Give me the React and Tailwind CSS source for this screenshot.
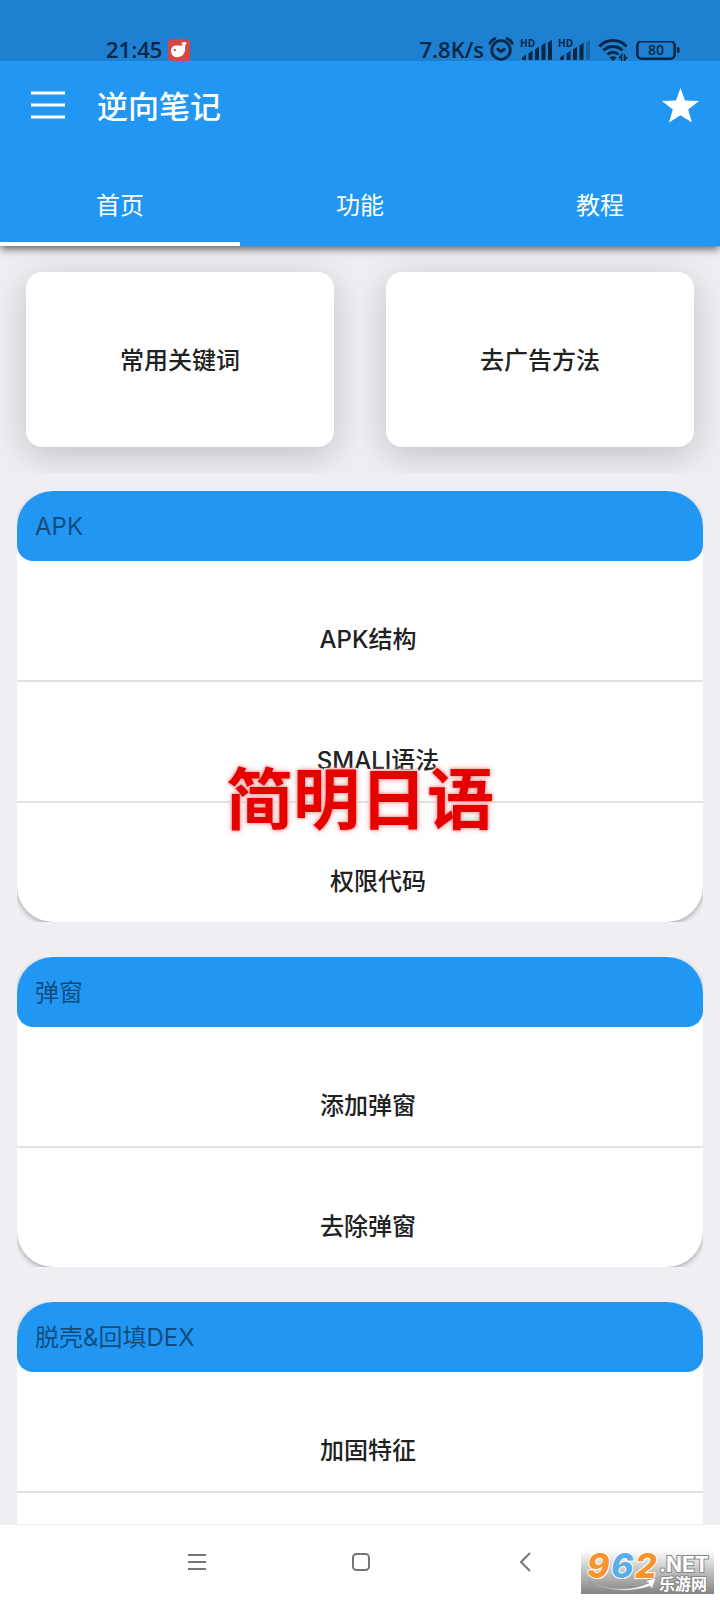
import { useState } from 'react'

const TABS = ['首页', '功能', '教程']

const SHORTCUTS = ['常用关键词', '去广告方法']

const GROUPS = [
  {
    title: 'APK',
    rows: [
      { label: 'APK结构' },
      { label: 'SMALI语法', indent: true },
      { label: '权限代码', indent: true },
    ],
  },
  { title: '弹窗', rows: [{ label: '添加弹窗' }, { label: '去除弹窗' }] },
  { title: '脱壳&回填DEX', rows: [{ label: '加固特征' }, { label: '' }] },
]

function WhaleIcon() {
  return (
    <svg viewBox="0 0 22 22" className="h-[22px] w-[22px]" aria-hidden="true">
      <rect width="22" height="22" rx="4" fill="#d84545" />
      <path d="M3 11.500C3.200 8.600 5.400 6.600 8.400 6.600c2.100 0 4.300.3 5.900-.4.800-.4.500-1.200-.5-1.300-.3-.6-.2-1.300.2-1.700h4.300c.4 1.400-.2 2.300-1.300 2.900.5 3.500.3 7-1.700 9.400-2.100 2.500-5.800 3.400-8.700 2.200C4.100 16.700 2.900 14.200 3 11.500z" fill="#fff" />
      <circle cx="6.800" cy="11" r="0.900" fill="#5a1a1a" />
    </svg>
  )
}

function AlarmIcon() {
  return (
    <svg viewBox="0 0 26 24" className="h-6 w-[26px]" fill="none" stroke="currentColor" strokeWidth="2.8" strokeLinecap="round" aria-hidden="true">
      <circle cx="13" cy="13" r="9.300" />
      <path d="M1.800 6.200C3 4 4.700 2.500 7 1.600M24.200 6.200C23 4 21.300 2.500 19 1.600" />
      <path d="M9.800 12.200l3.200 2.500 3.500-2.500" strokeLinejoin="round" />
    </svg>
  )
}

function SignalIcon({ weak }) {
  return (
    <svg viewBox="0 0 32 22" className="h-[22px] w-8 overflow-visible" fill="currentColor" aria-hidden="true">
      <text x="0" y="8" fontSize="10" fontWeight="700">HD</text>
      <path d="M2 20v-1.500l4-2.700V20q0 1-1 1H3q-1 0-1-1z" />
      <path d="M8.500 20v-5.500l4-2.700V20q0 1-1 1h-2q-1 0-1-1z" />
      <path d="M15 20V10.500l4-2.700V20q0 1-1 1h-2q-1 0-1-1z" />
      <path d="M21.500 20V6.500l4-2.700V20q0 1-1 1h-2q-1 0-1-1z" />
      <path d="M28 20V3.500l4-2.700V20q0 1-1 1h-2q-1 0-1-1z" opacity={weak ? 0.3 : 1} />
    </svg>
  )
}

function WifiIcon() {
  return (
    <svg viewBox="0 0 30 22" className="h-[22px] w-[30px]" fill="none" stroke="currentColor" strokeWidth="3" aria-hidden="true">
      <path d="M1.500 7.500C9-.4 21-.4 28.500 7.500" />
      <path d="M5.500 11.500c5.400-5.400 13.600-5.400 19 0" />
      <path d="M9.500 15.500c3.200-3.100 7.800-3.100 11 0" />
      <path d="M11.500 18.500c2-1.800 5-1.800 7 0L15 22z" fill="currentColor" stroke="none" />
      <path d="M23.500 22v-6l-2.500 3.500M26.500 15v6.500l2.500-3.500" strokeWidth="1.600" />
    </svg>
  )
}

function BatteryIcon() {
  return (
    <svg viewBox="0 0 44 20" className="h-5 w-11" aria-hidden="true">
      <rect x="1.300" y="0.300" width="37.400" height="17.400" rx="4.500" fill="none" stroke="currentColor" strokeWidth="2.600" className="overflow-visible" />
      <rect x="41" y="6" width="2.500" height="6" rx="1.200" fill="currentColor" />
      <text x="20" y="14" fontSize="14" fontWeight="600" textAnchor="middle" fill="currentColor">80</text>
    </svg>
  )
}

function StatusBar() {
  return (
    <div className="relative z-20 flex h-[61px] shrink-0 items-end justify-between bg-[#1d80d0] pr-10 pl-[106px] font-['Open_Sans','Noto_Sans_CJK_SC',sans-serif] text-[22px] leading-6 font-semibold text-[#062747]">
      <div className="flex items-end gap-1.5">
        <span>21:45</span>
        <WhaleIcon />
      </div>
      <div className="flex items-end gap-1.5">
        <div className="flex items-end gap-1">
          <span>7.8K/s</span>
          <AlarmIcon />
        </div>
        <SignalIcon />
        <SignalIcon weak />
        <div className="flex items-end gap-2 pl-0.5">
          <WifiIcon />
          <BatteryIcon />
        </div>
      </div>
    </div>
  )
}

function Header({ active, onSelect }) {
  return (
    <header className="relative z-10 shrink-0 bg-[#2196f3] text-white shadow-[0_3px_8px_rgba(0,0,0,0.6)]">
      <div className="flex h-[93px] items-start pt-[26px] pr-[21px] pl-[31px]">
        <button type="button" aria-label="菜单" className="mt-1 mr-8">
          <svg viewBox="0 0 34 28" className="h-7 w-[34px]" stroke="currentColor" strokeWidth="3" aria-hidden="true">
            <path d="M0 2h34M0 14h34M0 26h34" />
          </svg>
        </button>
        <h1 className="flex-1 text-[31px] leading-10 font-medium">逆向笔记</h1>
        <button type="button" aria-label="收藏">
          <svg viewBox="0 0 37 35" className="mt-px h-[35px] w-[37px]" fill="currentColor" aria-hidden="true">
            <path d="M18.500 0l4.600 12.500L37 13.100 26.200 21.500 30 34.600 18.500 27.300 7 34.600l3.800-13.100L0 13.100l13.900-.6z" />
          </svg>
        </button>
      </div>
      <nav className="grid grid-cols-3">
        {TABS.map((tab, i) => (
          <button
            key={tab}
            type="button"
            onClick={() => onSelect(i)}
            className={`h-[92px] border-b-4 pt-4 text-2xl ${active === i ? 'border-white' : 'border-transparent'}`}
          >
            {tab}
          </button>
        ))}
      </nav>
    </header>
  )
}

function Group({ title, rows }) {
  return (
    <section className="overflow-hidden">
      <div className="overflow-hidden rounded-[36px] bg-white shadow-[0_2px_5px_rgba(0,0,0,0.3)]">
        <h2 className="flex h-[70px] items-center rounded-b-2xl bg-[#2196f3] px-[18px] pt-0.5 text-2xl text-black/50">{title}</h2>
        <ul className="divide-y-2 divide-[#e2e2e2]">
          {rows.map((row, i) => (
            <li key={i}>
              <button
                type="button"
                className={`flex h-[119px] w-full items-center justify-center pt-[38px] text-2xl font-medium ${row.indent ? 'pl-9' : 'pl-4'}`}
              >
                {row.label}
              </button>
            </li>
          ))}
        </ul>
      </div>
    </section>
  )
}

function NavBar() {
  return (
    <nav className="flex h-[76px] shrink-0 items-center justify-center gap-[146px] border-t border-[#f0f0f0] bg-white pb-0.5 pl-0.5 text-[#757575]">
      <button type="button" aria-label="最近任务">
        <svg viewBox="0 0 18 20" className="h-5 w-[18px]" stroke="currentColor" strokeWidth="2" aria-hidden="true">
          <path d="M0 3h18M0 10h18M0 17h18" />
        </svg>
      </button>
      <button type="button" aria-label="主屏幕">
        <svg viewBox="0 0 18 20" className="h-5 w-[18px]" fill="none" stroke="currentColor" strokeWidth="2" aria-hidden="true">
          <rect x="1" y="2" width="16" height="16" rx="3.500" />
        </svg>
      </button>
      <button type="button" aria-label="返回">
        <svg viewBox="0 0 18 20" className="h-5 w-[18px]" fill="none" stroke="currentColor" strokeWidth="2" aria-hidden="true">
          <path d="M14 1L5 10l9 9" />
        </svg>
      </button>
    </nav>
  )
}

function SiteBadge() {
  return (
    <div className="absolute right-1.5 bottom-1.5 h-[44px] w-[133px] bg-linear-to-b from-white to-[#848484]">
      <svg viewBox="0 0 133 44" className="h-full w-full overflow-visible" role="img" aria-label="962.NET 乐游网">
        <g fontWeight="800" stroke="#fff" strokeWidth="2" paintOrder="stroke">
          <text x="6" y="28" fontSize="34" fontStyle="italic" fill="#f7942b">9</text>
          <text x="30" y="28" fontSize="34" fontStyle="italic" fill="#5aaee6">6</text>
          <text x="54" y="28" fontSize="34" fontStyle="italic" fill="#f7942b">2</text>
        </g>
        <g fill="#fff" stroke="#888" strokeWidth="2" paintOrder="stroke">
          <text x="78" y="22" fontSize="21" fontWeight="700">.NET</text>
          <text x="78" y="40" fontSize="16" fontWeight="700">乐游网</text>
        </g>
        <path d="M7 31c18 9 42 11 61 2l-4-2 11-3-4 11-2-3c-19 7-46 5-62-5z" fill="#fff" stroke="#888" strokeWidth="0.500" />
      </svg>
    </div>
  )
}

export default function App() {
  const [active, setActive] = useState(0)

  return (
    <div className="relative flex h-screen flex-col overflow-hidden bg-[#efeef3] font-[family-name:Inter,'Noto_Sans_CJK_SC',sans-serif] text-[#212121]">
      <StatusBar />
      <Header active={active} onSelect={setActive} />

      <main className="min-h-0 flex-1 overflow-hidden">
        <div className="grid grid-cols-2 overflow-hidden">
          {SHORTCUTS.map((label) => (
            <div key={label} className="overflow-hidden p-[26px]">
              <button
                type="button"
                className="h-[175px] w-full rounded-2xl bg-white pt-0.5 text-2xl font-medium shadow-[0_8px_36px_rgba(0,0,0,0.2)]"
              >
                {label}
              </button>
            </div>
          ))}
        </div>
        <div className="flex flex-col gap-[35px] px-[17px] pt-[18px]">
          {GROUPS.map((group) => (
            <Group key={group.title} title={group.title} rows={group.rows} />
          ))}
        </div>
      </main>

      <NavBar />

      <div className="pointer-events-none absolute inset-0 grid place-items-center">
        <p className="text-[67px] leading-[66px] font-bold text-[#e60000] [paint-order:stroke_fill] [-webkit-text-stroke:3px_#fff4f4] [text-shadow:0_0_3px_#ec9a9a,0_0_6px_#f0a8a8]">
          简明日语
        </p>
      </div>
      <SiteBadge />
    </div>
  )
}
